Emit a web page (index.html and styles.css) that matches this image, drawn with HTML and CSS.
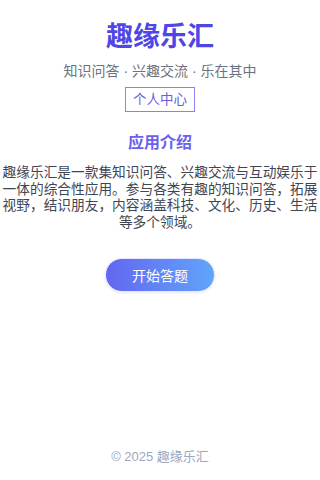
FILE: index.html
```html
<!DOCTYPE html>
<html lang="zh">
<head>
<meta charset="utf-8">
<meta name="viewport" content="width=device-width, initial-scale=1">
<title>趣缘乐汇</title>
<link rel="stylesheet" href="styles.css">
</head>
<body>
<div class="page">
  <main class="main">
    <h1 class="title">趣缘乐汇</h1>
    <p class="tagline">知识问答 · 兴趣交流 · 乐在其中</p>
    <a class="profile-link" href="#">个人中心</a>
    <h2 class="section-title">应用介绍</h2>
    <p class="intro">趣缘乐汇是一款集知识问答、兴趣交流与互动娱乐于一体的综合性应用。参与各类有趣的知识问答，拓展视野，结识朋友，内容涵盖科技、文化、历史、生活等多个领域。</p>
    <button class="start-btn" type="button">开始答题</button>
  </main>
  <footer class="footer">© 2025 趣缘乐汇</footer>
</div>
</body>
</html>
```
FILE: styles.css
```css
* { box-sizing: border-box; }
html, body { margin: 0; padding: 0; background: #ffffff; }
body {
  font-family: "Liberation Sans", "Noto Sans CJK SC", sans-serif;
}
.page {
  min-height: 100vh;
  display: flex;
  flex-direction: column;
  align-items: center;
}
.main {
  display: flex;
  flex-direction: column;
  align-items: center;
  width: 100%;
  padding-top: 21px;
}
.title {
  margin: 0;
  font-size: 27px;
  line-height: 1.2;
  font-weight: 700;
  color: #4f46e5;
}
.tagline {
  margin: 10px 0 0;
  font-size: 14px;
  line-height: 1.2;
  color: #6b7280;
}
.profile-link {
  margin-top: 7px;
  display: inline-block;
  padding: 0 7px;
  height: 25px;
  line-height: 23px;
  border: 1px solid #8a80ef;
  font-size: 13.5px;
  color: #6b5fd8;
  text-decoration: none;
}
.section-title {
  margin: 21px 0 0;
  font-size: 16px;
  line-height: 1.2;
  font-weight: 700;
  color: #6a60ee;
}
.intro {
  margin: 13px 0 0;
  width: 100%;
  padding: 0 2px;
  font-size: 13.7px;
  line-height: 16.5px;
  color: #3f4653;
  text-align: center;
}
.start-btn {
  margin-top: 27px;
  width: 110px;
  height: 34px;
  border: 1px solid #e6e8ff;
  border-radius: 17px;
  background: linear-gradient(90deg, #6366f1, #60a5fa);
  color: #ffffff;
  font-family: inherit;
  font-size: 14px;
  cursor: pointer;
  box-shadow: 0 1px 3px rgba(99, 102, 241, 0.15);
}
.footer {
  margin-top: auto;
  padding-bottom: 15px;
  font-size: 13px;
  line-height: 16px;
  color: #9ba7c2;
}
```
